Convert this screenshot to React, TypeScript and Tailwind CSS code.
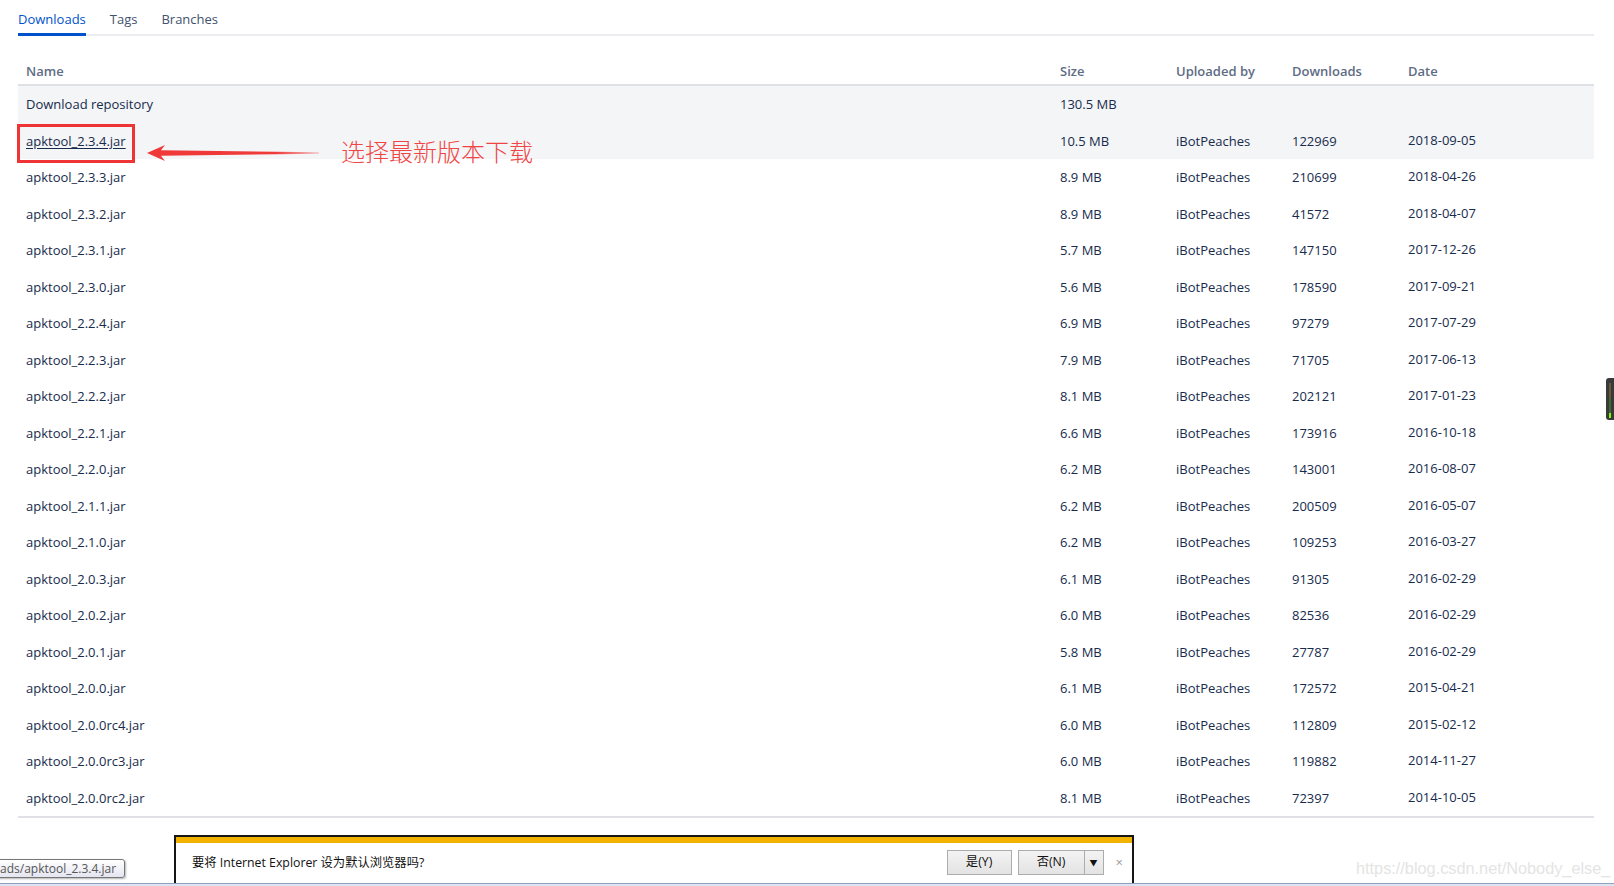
import React from "react";

const rows: [string, string, string, string, string][] = [
  ["apktool_2.3.4.jar", "10.5 MB", "iBotPeaches", "122969", "2018-09-05"],
  ["apktool_2.3.3.jar", "8.9 MB", "iBotPeaches", "210699", "2018-04-26"],
  ["apktool_2.3.2.jar", "8.9 MB", "iBotPeaches", "41572", "2018-04-07"],
  ["apktool_2.3.1.jar", "5.7 MB", "iBotPeaches", "147150", "2017-12-26"],
  ["apktool_2.3.0.jar", "5.6 MB", "iBotPeaches", "178590", "2017-09-21"],
  ["apktool_2.2.4.jar", "6.9 MB", "iBotPeaches", "97279", "2017-07-29"],
  ["apktool_2.2.3.jar", "7.9 MB", "iBotPeaches", "71705", "2017-06-13"],
  ["apktool_2.2.2.jar", "8.1 MB", "iBotPeaches", "202121", "2017-01-23"],
  ["apktool_2.2.1.jar", "6.6 MB", "iBotPeaches", "173916", "2016-10-18"],
  ["apktool_2.2.0.jar", "6.2 MB", "iBotPeaches", "143001", "2016-08-07"],
  ["apktool_2.1.1.jar", "6.2 MB", "iBotPeaches", "200509", "2016-05-07"],
  ["apktool_2.1.0.jar", "6.2 MB", "iBotPeaches", "109253", "2016-03-27"],
  ["apktool_2.0.3.jar", "6.1 MB", "iBotPeaches", "91305", "2016-02-29"],
  ["apktool_2.0.2.jar", "6.0 MB", "iBotPeaches", "82536", "2016-02-29"],
  ["apktool_2.0.1.jar", "5.8 MB", "iBotPeaches", "27787", "2016-02-29"],
  ["apktool_2.0.0.jar", "6.1 MB", "iBotPeaches", "172572", "2015-04-21"],
  ["apktool_2.0.0rc4.jar", "6.0 MB", "iBotPeaches", "112809", "2015-02-12"],
  ["apktool_2.0.0rc3.jar", "6.0 MB", "iBotPeaches", "119882", "2014-11-27"],
  ["apktool_2.0.0rc2.jar", "8.1 MB", "iBotPeaches", "72397", "2014-10-05"],
];

const grid = "grid grid-cols-[1034px_116px_116px_116px_1fr] items-center";

export default function App() {
  return (
    <div className="relative w-[1614px] h-[886px] overflow-hidden bg-white font-['Open_Sans','Noto_Sans_CJK_SC',sans-serif] text-[13px] text-[#172b4d]">
      <div className="pl-[18px] pr-[20px]">
        {/* Tabs */}
        <div className="flex gap-[24px] border-b-2 border-[#ebecf0] h-[36px]">
          <div className="-mb-[2px] border-b-[3px] border-[#0052cc] text-[#0052cc] pt-[9px] leading-[20px]">Downloads</div>
          <div className="text-[#42526e] pt-[9px] leading-[20px]">Tags</div>
          <div className="text-[#42526e] pt-[9px] leading-[20px]">Branches</div>
        </div>

        {/* Table */}
        <div className="mt-[22px] border-b-2 border-[#dfe1e6]">
          <div className={`${grid} h-[28px] pt-[1px] border-b-2 border-[#dfe1e6] text-[#5e6c84] font-semibold`}>
            <div className="pl-[8px]">Name</div>
            <div className="pl-[8px]">Size</div>
            <div className="pl-[8px]">Uploaded by</div>
            <div className="pl-[8px]">Downloads</div>
            <div className="pl-[8px]">Date</div>
          </div>
          <div className={`${grid} h-[36.5px] pt-[1px] bg-[#f4f5f7]`}>
            <div className="pl-[8px]">Download repository</div>
            <div className="pl-[8px]">130.5 MB</div>
            <div />
            <div />
            <div />
          </div>
          {rows.map((r, i) => (
            <div key={r[0]} className={`${grid} h-[36.5px] pt-[1px] ${i === 0 ? "bg-[#f4f5f7]" : ""}`}>
              <div className="pl-[8px]">
                <span className={i === 0 ? "underline underline-offset-2" : ""}>{r[0]}</span>
              </div>
              <div className="pl-[8px]">{r[1]}</div>
              <div className="pl-[8px]">{r[2]}</div>
              <div className="pl-[8px]">{r[3]}</div>
              <div className="pl-[8px] -translate-y-[1px]">{r[4]}</div>
            </div>
          ))}
        </div>
      </div>

      {/* Red annotation */}
      <div className="absolute left-[17px] top-[124px] w-[118px] h-[39px] border-[3px] border-[#ee3434]" />
      <svg className="absolute left-[145px] top-[143px]" width="178" height="20" viewBox="0 0 178 20">
        <defs>
          <linearGradient id="fade" x1="0" y1="0" x2="1" y2="0">
            <stop offset="0" stopColor="#f03a3a" />
            <stop offset="0.75" stopColor="#f03a3a" />
            <stop offset="1" stopColor="#f03a3a" stopOpacity="0.25" />
          </linearGradient>
        </defs>
        <path d="M2 10 L20 2 L16 7.2 L174 9.3 L174 10.7 L16 12.8 L20 18 Z" fill="url(#fade)" />
      </svg>
      <div className="absolute left-[341px] top-[137px] text-[24px] leading-[28px] text-[#f04545] font-['Noto_Sans_CJK_SC',sans-serif] font-light">
        选择最新版本下载
      </div>

      {/* Scroll indicator */}
      <div className="absolute right-0 top-[378px] w-[8px] h-[42px] bg-[#3a3a3a] rounded-l-[3px] flex flex-col items-center pt-[5px]">
        <div className="w-[2px] h-[15px] bg-[#6b5a3a]" />
        <div className="w-[2px] h-[15px] bg-[#3e6b2e]" />
        <div className="w-[2px] h-[5px] bg-[#7cfc00]" />
      </div>

      {/* Watermark */}
      <div className="absolute left-[1356px] top-[857px] text-[16.3px] leading-[22px] text-[#e4e4e4] font-['Liberation_Sans',sans-serif]">
        https://blog.csdn.net/Nobody_else_
      </div>

      {/* IE notification bar */}
      <div className="absolute left-[174px] top-[835px] w-[960px] h-[60px] border-2 border-[#151515] bg-white">
        <div className="h-[6px] bg-[#f2b300]" />
        <div className="flex items-center h-[37px] pl-[16px] pr-[9px] text-[12.3px] text-[#111]">
          <span className="translate-y-[2px]">要将 Internet Explorer 设为默认浏览器吗?</span>
          <div className="ml-auto flex items-center gap-[6px] translate-y-[1px]">
            <div className="w-[65px] h-[25px] border border-[#acacac] bg-gradient-to-b from-[#f3f3f3] to-[#e3e3e3] flex items-center justify-center">
              是(Y)
            </div>
            <div className="w-[86px] h-[25px] border border-[#acacac] bg-gradient-to-b from-[#f3f3f3] to-[#e3e3e3] flex">
              <div className="flex-1 flex items-center justify-center">否(N)</div>
              <div className="w-[19px] border-l border-[#acacac] flex items-center justify-center text-[8px]">▼</div>
            </div>
          </div>
          <span className="ml-[12px] text-[#9a9a9a] text-[13px] translate-y-[1px]">×</span>
        </div>
      </div>

      {/* Tooltip */}
      <div className="absolute left-[-6px] top-[859px] w-[131px] h-[19px] border border-[#767676] rounded-[3px] bg-gradient-to-b from-white to-[#e4e5f0] shadow-[1px_1px_2px_rgba(0,0,0,0.3)] pl-[5px] text-[12px] leading-[17px] text-[#555]">
        ads/apktool_2.3.4.jar
      </div>

      {/* Status bar */}
      <div className="absolute left-0 right-0 top-[883px] h-[3px] bg-[#dbe4f0] border-t border-[#8ea2bf]" />
    </div>
  );
}
